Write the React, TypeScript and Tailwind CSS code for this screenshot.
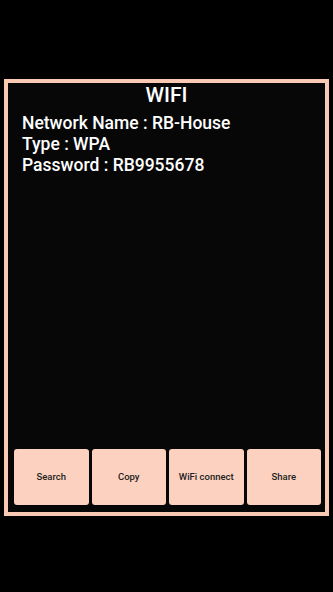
import React from 'react';

const buttons = ['Search', 'Copy', 'WiFi connect', 'Share'];

const App: React.FC = () => {
  return (
    <div className="h-[592px] w-[333px] bg-black pt-[79px] font-['Roboto',_'Liberation_Sans',_sans-serif]">
      <div className="mx-[4px] h-[437px] border-4 border-[#f9c9b3] bg-[#070708] flex flex-col">
        <h1 className="text-center text-[21px] leading-[25px] font-medium text-white">WIFI</h1>
        <div className="mt-[5px] pl-[14px] text-[17.5px] leading-[21px] font-medium text-white">
          <p>Network Name : RB-House</p>
          <p>Type : WPA</p>
          <p>Password : RB9955678</p>
        </div>
        <div className="flex-1" />
        <div className="flex gap-[3px] pl-[6px] pr-[4px] pb-[7px]">
          {buttons.map((label) => (
            <button
              key={label}
              className="flex-1 h-[56px] rounded-[3px] bg-[#fdd1bf] text-[9.5px] font-medium text-[#222] shadow-[0_1px_1px_rgba(0,0,0,0.4)]"
            >
              {label}
            </button>
          ))}
        </div>
      </div>
    </div>
  );
};

export default App;
